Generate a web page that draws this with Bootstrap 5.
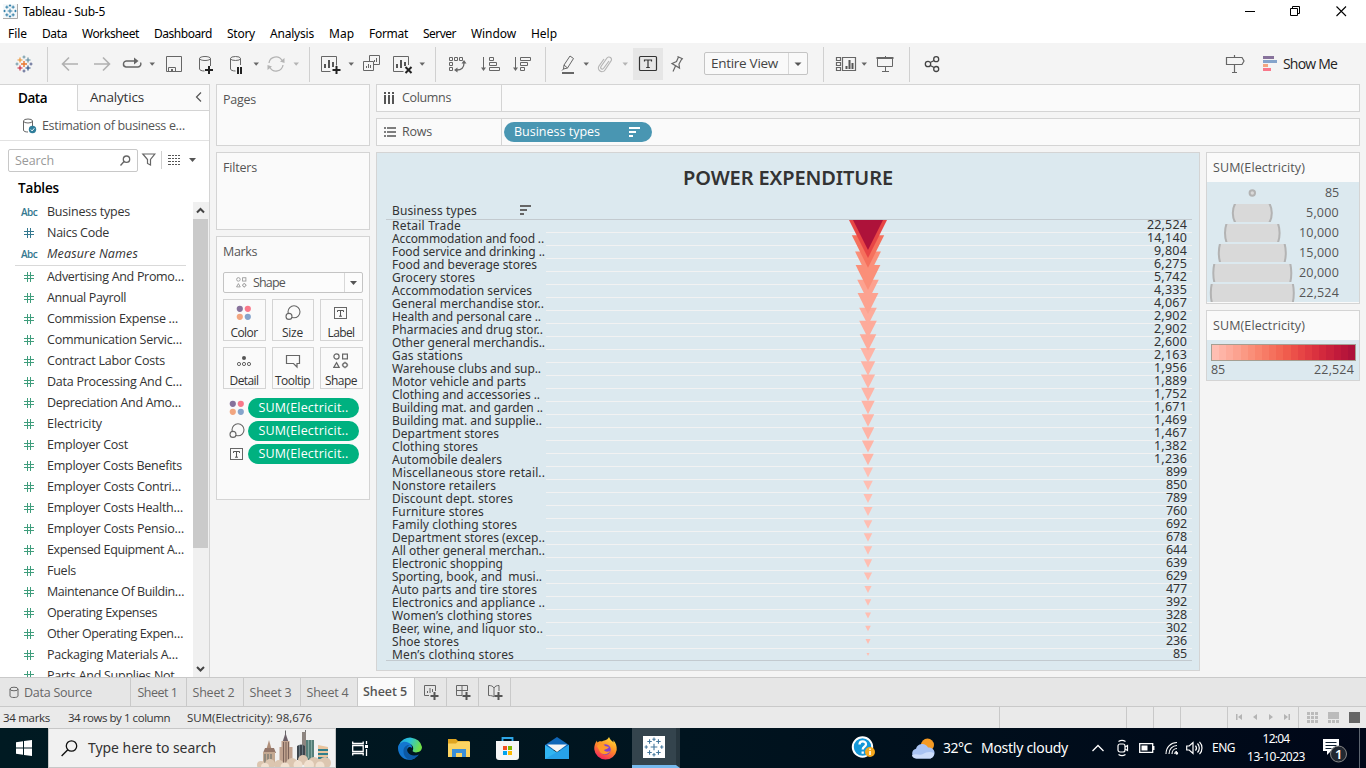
<!DOCTYPE html>
<html lang="en">
<head>
<meta charset="utf-8">
<title>Tableau - Sub-5</title>
<link href="https://cdn.jsdelivr.net/npm/bootstrap@5.3.0/dist/css/bootstrap.min.css" rel="stylesheet">
<style>
body{width:1366px;height:768px;overflow:hidden;font-family:"Open Sans","Noto Sans",sans-serif;font-size:12.5px;line-height:16px;color:#333;background:#f4f4f4}
svg{display:block;flex:none;overflow:visible}
span{white-space:nowrap}
.k{fill:none;stroke:#666;stroke-width:1}
.sys{font-family:"Noto Sans","Open Sans",sans-serif;font-size:12px;color:#000}
.titlebar{height:23px;background:#fff;padding-left:3px}
.titlebar .wm{width:46px}
.menubar{height:20px;background:#fff;padding:2px 0 0 8px}
.menubar span{margin-right:15px}
.toolbar-strip{height:41px;padding-top:5px}
.toolbar-strip>div{height:32px;flex:none;display:flex;justify-content:center}
.toolbar-strip .vsep{width:1px;height:35px;margin-top:-1px;background:#d0d0d0}
.w8{width:8px}.w10{width:10px}.w12{width:12px}.w28{width:28px}.w30{width:30px}.w32{width:32px}.w47{width:47px}
.l1{margin-left:1px}.l3{margin-left:3px}.l4{margin-left:4px}.l6{margin-left:6px}.l7{margin-left:7px}.l8{margin-left:8px}.l13{margin-left:13px}.l15{margin-left:15px}
.workarea{height:593px;gap:6px}
.data-pane{width:210px;background:#fff;border-right:1px solid #d4d4d4;border-top:1px solid #d4d4d4}
.tabs-dp{height:26px}
.tabs-dp .on{width:77px;font-weight:600;font-size:13.5px;color:#000;padding-left:18px}
.tabs-dp .off{width:132px;background:#fafafa;border:solid #d4d4d4;border-width:0 0 1px 1px;font-size:13.5px;padding:0 6px 1px 12px}
.ds-row{height:30px;border-bottom:1px solid #e2e2e2;padding-left:23px;color:#555}
.search-row{padding:8px 0 0 8px;height:33px}
.search-box{width:130px;height:23px;border:1px solid #c8c8c8;border-radius:2px;padding:0 6px;color:#999}
.tables-h{font-weight:600;font-size:13.5px;color:#000;padding:6px 0 0 18px;height:28px}
#fields{margin-top:-1px}
.field{height:21px;padding-left:21px;flex:none}
.field .ic{width:26px;flex:none}
.field .ic svg{margin-left:2px}
.abc{font-size:10px;font-weight:600;color:#34788f}
.fsep{height:1px;background:#d9d9d9;margin:1px 7px 0 15px;flex:none}
.sbar{width:16px;background:#f0f0f0;flex:none}
.thumb{height:329px;width:15px;background:#cacaca}
.panel{background:#fafafa;border:1px solid #d4d4d4;color:#555}
.cards{width:154px;gap:6px}
.cards .panel{padding:7px 6px}
.p-pages{height:62px}.p-filters{height:78px}.p-marks{height:264px}
.mark-type{height:21px;width:140px;border:1px solid #c4c4c4;border-radius:2px;background:#fcfcfc;margin-top:12px;padding-left:12px}
.mark-type .dd{width:18px;height:19px;border-left:1px solid #d8d8d8}
.mgrid{display:grid;grid-template-columns:43px 42px 43px;gap:6px;margin-top:6px;width:140px}
.mgrid>div{height:42px;border:1px solid #d4d4d4;color:#333;padding-top:5px;font-size:12px}
.mgrid svg{margin-right:1px}.mgrid span{margin-right:1px}
.pill{height:20px;border-radius:10px;color:#fff}
.pill-g{background:#00b180;width:111px}
.mline{height:23px;gap:4px;padding-left:6px}
.shelf{height:28px}
.shelf .lab{width:125px;border-right:1px solid #d4d4d4;padding-left:7px}
.pill-b{background:#4996b2;width:148px;margin-left:2px;padding:0 11px 0 10px}
.view{width:824px;height:519px;background:#dce9ef;border:1px solid #d4d4d4;padding:0 7px 0 9px;color:#333;font-family:"Noto Sans",sans-serif}
.v-title{font-weight:600;font-size:20px;height:50px;line-height:50px;padding-right:2px}
.v-head{height:17px;border-bottom:1px solid #c3cacf;padding-left:6px;font-size:12px;gap:43px}
.v-head svg{margin-top:-2px}
.vrow{height:13px;line-height:11px;font-size:12px}
.vrow .nm{width:160px;padding-left:6px;height:13px}
.vrow .pn{height:12px;border-bottom:1px solid #f2f2f2;box-sizing:content-box}
.vrow .vl{font-size:12.5px;line-height:10px;padding-right:5px}
.vbody{position:relative;height:441px;overflow:hidden;border-bottom:1px solid #c3cacf}
.vbody svg{position:absolute;left:0;top:0}
.legend{width:154px}
.legend .hd{height:29px;padding:7px 6px}
.legend .bd{background:#dce9ef}
.lg1{height:152px}.lg2{height:71px}
.lgrow{height:20px;padding-top:1px}
.lgrow svg{margin-left:1px;width:90px}
.lgrow span{margin-left:auto;padding-right:20px;font-size:12.5px}
.ramp{height:17px;width:145px;border:1px solid #a59f92}
.sheets{height:30px;background:#e6e6e6;border:solid #c9c9c9;border-width:1px 0;color:#666}
.sheets>div{height:28px;border-right:1px solid #c9c9c9;display:flex;align-items:center;justify-content:center}
.sheets .s57{width:57px;padding:1px 3px 0 0}.sheets .s56{width:56px;padding:1px 2px 0 0}.sheets .s32{width:32px}
.sheets .src{width:131px;justify-content:flex-start;padding:1px 0 0 9px;gap:5px}
.sheets .active-sheet{background:#fafafa;color:#555;font-weight:600;padding:0 2px 0 0}
.statusbar{height:21px;background:#eaeaea;font-size:11.5px;padding-left:3px;color:#333}
.statusbar .c{height:21px;border-left:1px solid #c9c9c9}
.c126{width:127px}.c27{width:27px}.c47{width:47px}.c70{width:71px}.c71{width:68px}
.taskbar{height:40px;background:linear-gradient(90deg,#001a22,#00141f 50%,#000718);color:#fff;font-family:"Noto Sans",sans-serif;font-size:14px}
.tsearch{width:288px;height:40px;background:#f1f1f1;border:1px solid #c7c7c7;color:#333;padding-left:12px}
.tk{width:49px;display:flex;justify-content:center;flex:none}
.tk-on{width:48px;height:40px;background:#34444d;border-bottom:3px solid #76b9ed;border-right:4px solid #27363e}
</style>
</head>
<body class="d-flex flex-column">
<svg width="0" height="0" class="position-absolute">
<defs>
<symbol id="caret" viewBox="-4 -16 8 32"><path d="M-2.5-1.5h5.5L.2 1.7z" fill="#666"/></symbol>
<symbol id="caret2" viewBox="-4 -16 8 32"><path d="M-2.5-1.5h5.5L.2 1.7z" fill="#b4b4b4"/></symbol>
<symbol id="hash" viewBox="0 0 12 12"><path d="M4.500 1v10M7.500 1v10M1 4.500h10M1 7.500h10" fill="none" stroke="currentColor" stroke-width="1"/></symbol>
<symbol id="shapes" viewBox="0 0 16 16"><g fill="none" stroke="#666" stroke-width="1.2"><circle cx="3.5" cy="3.5" r="2.6"/><rect x="9.6" y="1.1" width="4.8" height="4.8"/><path d="M3.5 9.6 6.2 14.4H.8z"/><circle cx="12" cy="12" r="2.2"/><path d="M12 8.8v1M12 14.2v1M8.8 12h1M14.2 12h1"/></g></symbol>
<symbol id="dots" viewBox="0 0 16 16"><circle cx="3.8" cy="3.8" r="3.1" fill="#87729b"/><circle cx="11.8" cy="3.8" r="3.1" fill="#f9788a"/><circle cx="3.8" cy="11.8" r="3.1" fill="#f2a680"/><circle cx="11.8" cy="11.8" r="3.1" fill="#85a4cb"/></symbol>
<symbol id="sizei" viewBox="0 0 16 16"><circle cx="9" cy="6.8" r="6" fill="none" stroke="#666" stroke-width="1.1"/><circle cx="4" cy="11.4" r="3" fill="#fafafa" stroke="#666" stroke-width="1.1"/></symbol>
<symbol id="labeli" viewBox="0 0 16 16"><rect x="1.5" y="2.5" width="12" height="11" fill="none" stroke="#666"/><path d="M4.5 7V5.5h6V7M7.5 5.5v5.7M6 11.2h3" fill="none" stroke="#555"/></symbol>
<symbol id="sorti" viewBox="0 0 12 12"><path d="M0 1h11v2H0zM0 5h7v2H0zM0 9h4v2H0z" fill="currentColor"/></symbol>
<symbol id="tab" viewBox="-9 -9 18 18"><path d="M0-3v6M-3 0h6" /><path d="M-4-7v4M-6-5h4M4-7v4M2-5h4M-4 3v4M-6 5h4M4 3v4M2 5h4M0-8.5v3M-1.5-7h3M0 5.5v3M-1.5 7h3M-7-1.5v3M-8.5 0h3M7-1.5v3M5.500 0h3"/></symbol>
</defs></svg>

<header class="titlebar sys d-flex align-items-center">
  <svg width="15" height="15" viewBox="0 0 15 15"><rect width="15" height="15" fill="#f4f8fa"/><path d="M0 14.5h14.500V0" fill="none" stroke="#aaa"/><g fill="none" stroke="#2a7aa5" stroke-width="1.2"><use href="#tab" x="0" y="0" width="14" height="14"/></g></svg>
  <span data-w="82" style="margin-left:5px;padding-top:1px">Tableau - Sub-5</span>
  <div class="ms-auto d-flex">
    <svg class="wm" height="20" viewBox="0 0 46 20"><path d="M17 9.500h10" stroke="#000"/></svg>
    <svg class="wm" height="20" viewBox="0 0 46 20"><path d="M16.500 6.500h7v7h-7zM18.500 6.500v-2h7v7h-2" fill="none" stroke="#000"/></svg>
    <svg class="wm" height="20" viewBox="0 0 46 20"><path d="m16.500 4.500 9.500 9.500m0-9.500-9.500 9.500" fill="none" stroke="#000" stroke-width="1.100"/></svg>
  </div>
</header>
<nav class="menubar sys d-flex align-items-center">
  <span data-w="19">File</span><span data-w="25">Data</span><span data-w="57">Worksheet</span><span data-w="58">Dashboard</span><span data-w="28">Story</span><span data-w="44">Analysis</span><span data-w="25">Map</span><span data-w="39">Format</span><span data-w="33">Server</span><span data-w="45">Window</span><span data-w="26">Help</span>
</nav>

<div class="toolbar-strip d-flex">
  <div class="w47"><svg width="32" height="32" viewBox="-16 -16 32 32" fill="none" stroke-width="1.100"><path d="M0-3v6M-3 0h6" stroke="#e8762d" stroke-width="1.400"/><path d="M-4-6.500v5M-6.500-4h5" stroke="#eb912c"/><path d="M4-6.500v5M1.500-4h5" stroke="#59879b"/><path d="M-4 1.500v5M-6.500 4h5" stroke="#c72035"/><path d="M4 1.500v5M1.500 4h5" stroke="#1f457e"/><path d="M0-8.500v3M-1.500-7h3M-7-1.500v3M-8.500 0h3" stroke="#7199a6"/><path d="M0 5.500v3M-1.500 7h3M7-1.500v3M5.500 0h3" stroke="#5b6591"/></svg></div>
  <div class="vsep"></div>
  <div class="w32 l6"><svg width="32" height="32" viewBox="-16 -16 32 32"><path d="M8 0H-7M-1-6.500-7.500 0-1 6.500" fill="none" stroke="#b0b0b0" stroke-width="1.600"/></svg></div>
  <div class="w32"><svg width="32" height="32" viewBox="-16 -16 32 32"><path d="M-8 0H7M1-6.500 7.500 0 1 6.500" fill="none" stroke="#b0b0b0" stroke-width="1.600"/></svg></div>
  <div class="w28"><svg width="32" height="32" viewBox="-16 -16 32 32"><path class="k" d="M5-3H-5a3 3 0 0 0-1 6H6a3 3 0 0 0 2.500-4.500" style="stroke-width:1.400"/><path d="M2-6.500 6.500-3 2 .5z" fill="#666"/></svg></div>
  <div class="w12"><svg width="8" height="32"><use href="#caret"/></svg></div>
  <div class="w32"><svg width="32" height="32" viewBox="-16 -16 32 32"><path class="k" d="M-7.500-7.500h15v15h-15zM-5.500 7.500v-4h7v4"/><path d="M-3 5h2v2h-2z" fill="#666"/></svg></div>
  <div class="w30"><svg width="32" height="32" viewBox="-16 -16 32 32"><path class="k" d="M5.500 2V-5.500M-5.500-5.500V5c0 1 2 2 5 2"/><ellipse class="k" cy="-5.500" rx="5.500" ry="2"/><path d="M4 2v8M0 6h8" stroke="#222" stroke-width="2"/></svg></div>
  <div class="w30"><svg width="32" height="32" viewBox="-16 -16 32 32"><path class="k" d="M5.500 1V-5.500M-4.500-5.500V5c0 1 2 2 5 2"/><ellipse class="k" cx=".5" cy="-5.500" rx="5" ry="2"/><path d="M3 3v7M6 3v7" stroke="#222" stroke-width="2"/></svg></div>
  <div class="w12"><svg width="8" height="32"><use href="#caret"/></svg></div>
  <div class="w28"><svg width="32" height="32" viewBox="-16 -16 32 32"><path d="M-7-1a7 7 0 0 1 13-2.500M7 1a7 7 0 0 1-13 2.500" fill="none" stroke="#b4b4b4" stroke-width="1.300"/><path d="M8.500-6v5L4-2.500zM-8.500 6V1L-4 2.500z" fill="#b4b4b4"/></svg></div>
  <div class="w12"><svg width="8" height="32"><use href="#caret2"/></svg></div>
  <div class="vsep l7"></div>
  <div class="w32 l4"><svg width="32" height="32" viewBox="-16 -16 32 32"><path class="k" d="M6.500 1.500v-9h-15v15h9"/><path d="M-5 4V0M-1 4V-4M3 3V-2" stroke="#555" stroke-width="2"/><path d="M6.500 2v8M2.500 6h8" stroke="#222" stroke-width="2"/></svg></div>
  <div class="w10"><svg width="8" height="32"><use href="#caret"/></svg></div>
  <div class="w32"><svg width="32" height="32" viewBox="-16 -16 32 32"><path class="k" d="M-2.500-2.500v-6h10v9h-6M-8.500-2.500h10v9h-10zM-5.500 4V2M-3.500 4V0M-1.500 4V1M1-3v0M2.500-2v-2M4.500-2v-4"/></svg></div>
  <div class="w28"><svg width="32" height="32" viewBox="-16 -16 32 32"><path class="k" d="M6.500 1v-8.500h-15v15h10"/><path d="M-5 4V0M-1 4V-4M3 2V-2" stroke="#555" stroke-width="2"/><path d="m3.500 3 6 6m0-6-6 6" stroke="#222" stroke-width="2"/></svg></div>
  <div class="w12"><svg width="8" height="32"><use href="#caret"/></svg></div>
  <div class="vsep l7"></div>
  <div class="w32 l6"><svg width="32" height="32" viewBox="-16 -16 32 32"><path class="k" d="M-8.500-6.500h3v3h-3zM-3.500-6.500h3v3h-3zM1.500-6.500h3v3h-3zM-8.500-1.500h3v3h-3zM-8.500 3.500h3v3h-3z"/><path class="k" d="M6-1C6 3.500 3.500 6-1 6" style="stroke-width:1.300"/><path d="M3.500-.5 6-4 8.500-.5zM-.5 3.500-4 6l3.500 2.500z" fill="#666"/></svg></div>
  <div class="w32"><svg width="32" height="32" viewBox="-16 -16 32 32"><path class="k" d="M-6.500-7V6M-.5-6.500h4v3h-4zM-.5-1.500h7v3h-7zM-.5 3.500h10v3h-10z"/><path d="M-9 3.500h5L-6.500 7z" fill="#666"/></svg></div>
  <div class="w32"><svg width="32" height="32" viewBox="-16 -16 32 32"><path class="k" d="M-6.500-7V6M-1.500-6.500h10v3h-10zM-1.500-1.500h7v3h-7zM-1.500 3.500h4v3h-4z"/><path d="M-9 3.500h5L-6.500 7z" fill="#666"/></svg></div>
  <div class="vsep l7"></div>
  <div class="w28 l8"><svg width="32" height="32" viewBox="-16 -16 32 32"><path class="k" d="m-4 1 6-9 3.500 2.500L-.5 4zl-.5 4 4-1M-4.500 5-6 6.500"/><path d="M-6 9H6" stroke="#666" stroke-width="2"/></svg></div>
  <div class="w8"><svg width="8" height="32"><use href="#caret"/></svg></div>
  <div class="w30"><svg width="32" height="32" viewBox="-16 -16 32 32"><path d="M4-3-1.500 4.500a1.500 1.500 0 0 1-2.500-2L2-6a2.500 2.500 0 0 1 4 3L0 6a3.500 3.500 0 0 1-6-4L-1-5" fill="none" stroke="#b4b4b4" stroke-width="1.200"/></svg></div>
  <div class="w10"><svg width="8" height="32"><use href="#caret2"/></svg></div>
  <div class="w30 l3" style="background:#e6e6e6"><svg width="32" height="32" viewBox="-16 -16 32 32"><rect x="-8.500" y="-7.500" width="17" height="14" rx="1" fill="none" stroke="#333" stroke-width="1.200"/><path d="M-3.500-2.500v-1.500h7v1.500M0-4v7.500M-1.800 3.500h3.600" fill="none" stroke="#333" stroke-width="1.200"/></svg></div>
  <div class="w28"><svg width="32" height="32" viewBox="-16 -16 32 32"><path class="k" d="M.5-7.500 6-5M1.500-7-.5-2.500-5-.5 2.500 4 2 0 5-5.500M-1.500 2-4 7.500" style="stroke-width:1.200"/></svg></div>
  <div class="l13 align-items-center" style="width:104px;height:23px;margin-top:4px;border:1px solid #c4c4c4;border-radius:2px;background:#f9f9f9;font-size:13.500px;color:#444"><span data-w="67" style="margin:-2px 0 0 1px">Entire View</span><div class="d-flex justify-content-center align-items-center" style="width:19px;height:21px;border-left:1px solid #d8d8d8;margin-left:10px;margin-right:-5px"><svg width="8" height="32" viewBox="-4 -16 8 32"><path d="M-3.500-1.500h7L0 2z" fill="#555"/></svg></div></div>
  <div class="vsep l15"></div>
  <div class="w30 l6"><svg width="32" height="32" viewBox="-16 -16 32 32"><path class="k" d="M-8.500-6.500h4v3h-4zM-8.500-1.500h4v3h-4zM-8.500 3.500h4v3h-4zM-2.500-6.500h13v13h-13z" style="stroke-width:1.200"/><path d="M1.500 5V2M4.500 5V-4M7.500 5V-1" stroke="#555" stroke-width="2"/></svg></div>
  <div class="w8"><svg width="8" height="32"><use href="#caret"/></svg></div>
  <div class="w32 l1"><svg width="32" height="32" viewBox="-16 -16 32 32"><path d="M-8.500-6H8.500" stroke="#666" stroke-width="2"/><path class="k" d="M.5-8v2M-7.500-5v7.500h15V-5M.5 3v4M-3 7.500h7"/></svg></div>
  <div class="vsep l8"></div>
  <div class="w32 l6"><svg width="32" height="32" viewBox="-16 -16 32 32" fill="none" stroke="#444" stroke-width="1.300"><circle cx="-4" r="2.700"/><circle cx="4.200" cy="-4.800" r="2.500"/><circle cx="4.200" cy="5" r="2.500"/><path d="m-1.800-1.500 4-2M-1.800 1.500l4 2"/></svg></div>
  <div class="w32 ms-auto"><svg width="32" height="32" viewBox="-16 -16 32 32"><path class="k" d="M-8.500-6.500H7L9-3 7 .5H-8.500zM-.5-9v2M-.5.500v8M-3 8.500h5" style="stroke-width:1.200"/></svg></div>
  <div style="margin:0 29px 0 12px;color:#222;font-size:14px" class="align-items-center"><svg width="16" height="16" viewBox="0 0 16 16"><path d="M0 0h11v3H0z" fill="#87729b"/><path d="M0 4h14v3H0z" fill="#85a4cb"/><path d="M0 8h5v3H0z" fill="#f2a680"/><path d="M0 12h8v3H0z" fill="#f9788a"/></svg><span data-w="54" style="margin:-1px 0 0 4px">Show Me</span></div>
</div>

<main class="workarea d-flex">
  <aside class="data-pane d-flex flex-column flex-shrink-0">
    <div class="tabs-dp d-flex flex-shrink-0"><div class="on d-flex align-items-center"><span data-w="29">Data</span></div><div class="off d-flex align-items-center justify-content-between"><span data-w="54">Analytics</span><svg width="8" height="10" viewBox="0 0 8 10"><path d="M6 .5 1.500 5 6 9.500" fill="none" stroke="#555" stroke-width="1.200"/></svg></div></div>
    <div class="ds-row d-flex align-items-center flex-shrink-0"><svg width="14" height="16" viewBox="0 0 14 16"><ellipse class="k" cx="5" cy="3" rx="4.500" ry="2"/><path class="k" d="M.5 3v9c0 1.500 2 2 4.500 2M9.500 3v5"/><circle cx="9.500" cy="11.500" r="3.700" fill="#2f7e9b"/><path d="m7.800 11.500 1.300 1.400 2.200-2.600" fill="none" stroke="#fff"/></svg><span data-w="143" style="margin-left:5px">Estimation of business e…</span></div>
    <div class="search-row d-flex flex-shrink-0"><div class="search-box d-flex align-items-center justify-content-between"><span data-w="39">Search</span><svg width="11" height="11" viewBox="0 0 11 11"><circle class="k" cx="6.500" cy="4.200" r="3.200" style="stroke-width:1.300"/><path class="k" d="m4 6.500-3.500 4" style="stroke-width:1.300"/></svg></div>
      <svg style="margin:4px 0 0 4px" width="14" height="14" viewBox="0 0 14 14"><path class="k" d="M.8 1h12L8.500 6.500v5.500l-3-1.500v-4z" style="stroke-width:1.200"/></svg>
      <svg style="margin:2px 0 0 5px" width="42" height="18" viewBox="0 0 42 18"><path d="M.5 0v18" stroke="#d0d0d0"/><path d="M7 4.500h3m1 0h2m1 0h2m1 0h2M7 7.500h3m1 0h2m1 0h2m1 0h2M7 10.500h3m1 0h2m1 0h2m1 0h2M7 13.500h3m1 0h2m1 0h2m1 0h2" stroke="#555" stroke-width="1"/><path d="M28 7h7l-3.500 4z" fill="#555"/></svg></div>
    <div class="tables-h flex-shrink-0"><span data-w="41">Tables</span></div>
    <div class="d-flex flex-grow-1 overflow-hidden"><div id="fields" class="flex-grow-1 overflow-hidden"></div>
      <div class="sbar d-flex flex-column"><svg width="15" height="17" viewBox="0 0 15 17"><path d="m4 10.500 3.500-3.500 3.500 3.500" fill="none" stroke="#444" stroke-width="2"/></svg><div class="thumb"></div><svg class="mt-auto" width="15" height="17" viewBox="0 0 15 17"><path d="m4 7 3.500 3.500L11 7" fill="none" stroke="#444" stroke-width="2"/></svg></div></div>
  </aside>

  <section class="cards d-flex flex-column flex-shrink-0">
    <div class="panel p-pages"><span data-w="33">Pages</span></div>
    <div class="panel p-filters"><span data-w="34">Filters</span></div>
    <div class="panel p-marks"><span data-w="34">Marks</span>
      <div class="mark-type d-flex align-items-center"><svg width="11" height="11" opacity=".7"><use href="#shapes"/></svg><span data-w="32" style="margin-left:6px">Shape</span><div class="dd ms-auto d-flex justify-content-center align-items-center"><svg width="7" height="4"><path d="M0 0h7L3.500 4z" fill="#555"/></svg></div></div>
      <div class="mgrid">
        <div class="d-flex flex-column align-items-center"><svg width="16" height="16"><use href="#dots"/></svg><span data-w="27" class="mt-1">Color</span></div>
        <div class="d-flex flex-column align-items-center"><svg width="16" height="16"><use href="#sizei"/></svg><span data-w="21" class="mt-1">Size</span></div>
        <div class="d-flex flex-column align-items-center"><svg width="16" height="16"><use href="#labeli"/></svg><span data-w="27" class="mt-1">Label</span></div>
        <div class="d-flex flex-column align-items-center"><svg width="16" height="16" viewBox="0 0 16 16"><circle cx="8" cy="5" r="2" fill="#555"/><g class="k"><circle cx="3" cy="11" r="1.600"/><circle cx="8" cy="11" r="1.600"/><circle cx="13" cy="11" r="1.600"/></g></svg><span data-w="29" class="mt-1">Detail</span></div>
        <div class="d-flex flex-column align-items-center"><svg width="16" height="16" viewBox="0 0 16 16"><path class="k" d="M1.500 2.500h13v8h-2.500v3.500L8.500 10.500h-7z" style="stroke-width:1.200"/></svg><span data-w="35" class="mt-1">Tooltip</span></div>
        <div class="d-flex flex-column align-items-center"><svg width="16" height="16"><use href="#shapes"/></svg><span data-w="32" class="mt-1">Shape</span></div>
      </div>
      <div style="margin-top:7px">
        <div class="mline d-flex align-items-center"><svg width="16" height="16"><use href="#dots"/></svg><div class="pill pill-g d-flex align-items-center justify-content-center" style="margin-left:-1px"><span data-w="90">SUM(Electricit..</span></div></div>
        <div class="mline d-flex align-items-center"><svg width="16" height="16"><use href="#sizei"/></svg><div class="pill pill-g d-flex align-items-center justify-content-center" style="margin-left:-1px"><span data-w="90">SUM(Electricit..</span></div></div>
        <div class="mline d-flex align-items-center"><svg width="16" height="16"><use href="#labeli"/></svg><div class="pill pill-g d-flex align-items-center justify-content-center" style="margin-left:-1px"><span data-w="90">SUM(Electricit..</span></div></div>
      </div>
    </div>
  </section>

  <section class="d-flex flex-column flex-shrink-0" style="width:984px;gap:6px">
    <div class="panel shelf d-flex"><div class="lab d-flex align-items-center"><svg width="11" height="14" viewBox="0 0 11 14"><path d="M0 2h2M4 2h2M8 2h2" stroke="#555" stroke-width="2"/><path d="M1 4v9M5 4v9M9 4v9" stroke="#555" stroke-width="2"/></svg><span data-w="49" style="margin-left:7px">Columns</span></div></div>
    <div class="panel shelf d-flex align-items-center"><div class="lab d-flex align-items-center align-self-stretch"><svg width="12" height="12" viewBox="0 0 12 12"><path d="M0 2h2M0 6h2M0 10h2M3 2h9M3 6h9M3 10h9" stroke="#555" stroke-width="1.600"/></svg><span data-w="30" style="margin-left:6px">Rows</span></div><div class="pill pill-b d-flex align-items-center justify-content-between"><span data-w="86">Business types</span><svg width="12" height="12"><use href="#sorti"/></svg></div></div>
    <div class="d-flex" style="gap:6px">
      <div class="view">
        <div class="v-title text-center"><span data-w="210">POWER EXPENDITURE</span></div>
        <div class="v-head d-flex align-items-center"><span data-w="85">Business types</span><svg width="12" height="12" color="#666"><use href="#sorti"/></svg></div>
        <div class="vbody" id="rows"></div>
      </div>
      <div class="d-flex flex-column" style="gap:6px">
        <div class="panel legend lg1"><div class="hd"><span data-w="92">SUM(Electricity)</span></div><div class="bd" id="sizes"></div></div>
        <div class="panel legend lg2"><div class="hd"><span data-w="92">SUM(Electricity)</span></div><div class="bd" style="height:40px;padding:4px 5px 0 4px"><div class="ramp" id="ramp"></div><div class="d-flex justify-content-between" style="padding-top:1px"><span data-w="14">85</span><span data-w="40">22,524</span></div></div></div>
      </div>
    </div>
  </section>
</main>

<nav class="sheets d-flex">
  <div class="src"><svg width="10" height="12" viewBox="0 0 10 12"><ellipse class="k" cx="5" cy="2" rx="4" ry="1.800"/><path class="k" d="M1 2v7c0 2 8 2 8 0V2"/></svg><span data-w="68">Data Source</span></div>
  <div class="s56"><span data-w="40">Sheet 1</span></div><div class="s57"><span data-w="42">Sheet 2</span></div><div class="s57"><span data-w="42">Sheet 3</span></div><div class="s57"><span data-w="42">Sheet 4</span></div><div class="s57 active-sheet"><span data-w="44">Sheet 5</span></div>
  <div class="s32"><svg width="16" height="16" viewBox="0 0 16 16"><path class="k" d="M6 11.500H1.500v-10h11V7M4.500 9V7M7 9V4M9.500 8V5"/><path d="M11.500 8v8M7.500 12h8" stroke="#555" stroke-width="2"/></svg></div>
  <div class="s32"><svg width="16" height="16" viewBox="0 0 16 16"><path class="k" d="M7 11.500H1.500v-10h11V7M7 1.500v10M1.500 6.500h11"/><path d="M11.500 8v8M7.500 12h8" stroke="#555" stroke-width="2"/></svg></div>
  <div class="s32"><svg width="16" height="16" viewBox="0 0 16 16"><path class="k" d="M1.500 1.500C4 1.500 6 2 7 4c1-2 3-2.500 5-2.500V7M1.500 1.500v10c3 0 4.500.5 5.500 1.500V4"/><path d="M11.500 8v8M7.500 12h8" stroke="#555" stroke-width="2"/></svg></div>
</nav>
<footer class="statusbar d-flex align-items-center">
  <span data-w="47">34 marks</span><span data-w="102" style="margin-left:18px">34 rows by 1 column</span><span data-w="125" style="margin-left:17px">SUM(Electricity): 98,676</span>
  <div class="ms-auto c c126"></div><div class="c c27"></div><div class="c c27"></div><div class="c c47"></div>
  <div class="c c70"><svg width="69" height="20" viewBox="0 0 69 20"><path d="M8 7h1.500v6H8zM14 7v6l-4-3zM29 7v6l-4-3zM41 7v6l4-3zM56 7v6l4-3zM60.500 7H62v6h-1.500z" fill="#b4b4b4"/></svg></div>
  <div class="c c71"><svg width="67" height="20" viewBox="0 0 67 20"><path d="M8 5h3v3H8zM12 5h3v3h-3zM16 5h3v3h-3zM8 9h3v3H8zM12 9h3v3h-3zM16 9h3v3h-3zM8 13h3v3H8zM12 13h3v3h-3zM16 13h3v3h-3zM29 5h11v7H29zM29 13h3v3h-3zM33 13h3v3h-3zM37 13h3v3h-3z" fill="#bbb"/><path d="M50 5h11v11H50z" fill="#666"/></svg></div>
</footer>

<footer class="taskbar d-flex align-items-center">
  <div style="width:48px" class="d-flex justify-content-center"><svg width="16" height="16" viewBox="0 0 16 16"><path d="M0 2.200 7 1.200v6.300H0zM8 1 16 0v7.500H8zM0 8.500h7v6.300l-7-1zM8 8.500h8V16l-8-1z" fill="#fff"/></svg></div>
  <div class="tsearch d-flex align-items-center"><svg width="17" height="17" viewBox="0 0 17 17"><circle cx="10.500" cy="6" r="5.200" fill="none" stroke="#111" stroke-width="1.300"/><path d="M6.800 9.700.6 16" stroke="#111" stroke-width="1.400"/></svg><span data-w="128" style="margin-left:10px">Type here to search</span>
    <svg class="ms-auto" style="margin-right:3px" width="76" height="38" viewBox="0 0 76 38">
      <path d="m13 11 2.500 9h-5z" fill="#b08f7a"/><path d="M9 19h9l2 5H7z" fill="#94776a"/><path d="M7 23h12v14H7z" fill="#c4a992"/><path d="M9 25v10M12 25v10M15 25v10" stroke="#5f6b69"/>
      <path d="M29.500 1.500v8" stroke="#666"/><path d="m29.500 4 3 9h-6z" fill="#6c6069"/><path d="M25.500 12h8v6h3v19h-13V18h2z" fill="#c0a28f"/><path d="M27.500 13v24M30 13v24M32.500 13v24" stroke="#7b6259"/>
      <path d="M49.500 1v8" stroke="#777"/><path d="M46 3h4v26h-4z" fill="#8d8580"/><path d="M50 11h8v20h-8z" fill="#557f79"/><path d="M52.500 11v18M55.500 11v18" stroke="#86aaa3"/>
      <path d="M41 17q4-3 8 0v14h-8z" fill="#3d464d"/><path d="M43.500 16v14M46.500 16v14" stroke="#6b7880"/>
      <path d="M62 16l10 2v17H62z" fill="#e8c49d"/><path d="M62 21h10M62 25h10M62 29h10" stroke="#2f7f8c" stroke-width="2"/>
      <g fill="#dcc6b0"><circle cx="5" cy="36" r="4"/><circle cx="14" cy="35" r="5"/><circle cx="23" cy="36" r="5"/><circle cx="36" cy="35" r="6"/><circle cx="47" cy="31" r="5"/><circle cx="58" cy="34" r="6"/><circle cx="69" cy="34" r="6"/></g><g fill="#f1e1d0"><circle cx="9" cy="38" r="4"/><circle cx="29" cy="38" r="4.500"/><circle cx="42" cy="36" r="4.500"/><circle cx="53" cy="36" r="5"/><circle cx="64" cy="37" r="4.500"/></g><path d="M-2 38h80v1H-2z" fill="#c7c7c7"/><path d="M-2 39h80v5H-2z" fill="#001a22"/></svg></div>
  <div class="tk"><svg width="17" height="17" viewBox="0 0 17 17" fill="none" stroke="#fff" stroke-width="1.300"><path d="M.7 1.500V3.500h10.500v-2M.7 5.500h10.500v6H.7zM.7 15.500v-2h10.500v2M14.500 1v3M14.500 9v7"/><path d="M13 5h3v3h-3z" fill="#fff" stroke="none"/></svg></div>
  <div class="tk"><svg width="24" height="24" viewBox="0 0 24 24"><defs><linearGradient id="eg" x1="0" x2="1" y2=".3"><stop stop-color="#1fa7e6"/><stop offset=".5" stop-color="#2dc3d6"/><stop offset="1" stop-color="#6fe04a"/></linearGradient></defs><path d="M1 9A12 11.500 0 0 1 24 11c0 6-8 6.500-9.500 4 1.500-2 1-7-4-7C6 8 2 11 1 9z" fill="url(#eg)"/><path d="M0 12C0 7 6 4.500 10 6.500c3 1 4.500 3.500 4 5.500-2-2-5-1-5 3 0 4 4 7.500 9 6.500-2.500 2-5 2.500-7 2.300C4 23.500 0 18 0 12z" fill="#1376cf"/><path d="M5.500 15c0-4 3-6.500 6-6-3 1.500-3 5-1.500 7.500 2 3 6 4 11 2-2 3-6 5-9.500 5C7 22.500 5.500 18.500 5.500 15z" fill="#0c59a4"/></svg></div>
  <div class="tk"><svg width="22" height="20" viewBox="0 0 22 20"><path d="M0 1h8l2 2h11v4H0z" fill="#e0a520"/><path d="M0 5.500 8 5.500 10 3.500h12V19H0z" fill="#fcd462"/><path d="M4 11h14v8h-4v-4H8v4H4z" fill="#3b8fd8"/></svg></div>
  <div class="tk"><svg width="23" height="23" viewBox="0 0 23 23"><path d="M6.500 4.500V1h10v3.500" fill="none" stroke="#2ea7e8" stroke-width="1.800"/><path d="M0 4h23v16a3 3 0 0 1-3 3H3a3 3 0 0 1-3-3z" fill="#f6f6f6"/><path d="M7 9h4v4H7z" fill="#f25022"/><path d="M12 9h4v4h-4z" fill="#7fba00"/><path d="M7 14h4v4H7z" fill="#00a4ef"/><path d="M12 14h4v4h-4z" fill="#ffb900"/></svg></div>
  <div class="tk"><svg width="24" height="22" viewBox="0 0 24 22"><path d="M12 0 24 8v5H0V8z" fill="#1067b8"/><path d="M0 8v14h24V8L12 15.500z" fill="#31b5f2"/><path d="M0 22 24 8v14z" fill="#2196e3" opacity=".6"/><path d="M2 7.500h20l-10 7.500z" fill="#f6f6f6"/></svg></div>
  <div class="tk"><svg width="23" height="23" viewBox="0 0 23 23"><defs><linearGradient id="fg" x1=".8" x2=".3" y2="1"><stop stop-color="#ffdf3c"/><stop offset=".45" stop-color="#ff9425"/><stop offset="1" stop-color="#f5225f"/></linearGradient></defs><path d="M15 0c1 3 3 3.500 4.500 5.500 0-1 0-1.500-.3-2.500C22 6 23 9 22.700 13A11.300 11.300 0 0 1 .3 12.500C0 9 1 6 3 3.500c0 1 .2 1.500.5 2C5 4 6.500 4 8 4.500 9.500 3 13 4 15 0z" fill="url(#fg)"/><circle cx="11.500" cy="12.500" r="5.200" fill="#8341d2"/><path d="M3 9c2-3 6-3 8 0l4 1c-1 2-4 2-5 3 1 2 4 2 6 1-1 3-7 5-10 1z" fill="#ff9a2a"/></svg></div>
  <div class="tk-on d-flex align-items-center justify-content-center" style="margin-left:2px"><svg width="22" height="22" viewBox="0 0 22 22"><path d="M0 0h22v22H0z" fill="#fff"/><g fill="none" stroke="#45789d" stroke-width="1"><use href="#tab" x="1" y="1" width="20" height="20"/></g></svg></div>
  <svg style="margin-left:172px" width="24" height="24" viewBox="0 0 24 24"><circle cx="10.500" cy="11" r="9.700" fill="#1497d8" stroke="#fff" stroke-width="2"/><path d="M7.500 8.500c0-4 6.500-4 6.500-.3 0 2.500-3.300 2.500-3.300 5.300M10.700 15.500v2.300" fill="none" stroke="#fff" stroke-width="2.300"/><circle cx="18" cy="16" r="5" fill="#f6a81c"/><path d="M18 15v4M18 12.500v1.500" stroke="#fff" stroke-width="1.500"/></svg>
  <svg style="margin-left:35px" width="25" height="21" viewBox="0 0 25 21"><circle cx="16.500" cy="7" r="6.500" fill="#f59a23"/><path d="M5.500 20.500a5 5 0 0 1-.5-9.800 6.500 6.500 0 0 1 12-1.200 5.500 5.500 0 0 1 2 11z" fill="#a9c3f3"/><path d="M1 17c4-2 8 1 11-1s7-3 11-1c0 3-2 5.500-4 5.500H5.500C3 20.500 1 19 1 17z" fill="#cdddfb"/></svg>
  <span data-w="29" style="margin-left:7px">32°C</span><span data-w="87" style="margin-left:9px">Mostly cloudy</span>
  <svg style="margin-left:23px" width="14" height="8" viewBox="0 0 14 8"><path d="m1.500 7 5.500-5.500L12.500 7" fill="none" stroke="#fff" stroke-width="1.300"/></svg>
  <svg style="margin-left:11px" width="14" height="16" viewBox="0 0 14 16" fill="none" stroke="#fff" stroke-width="1.200"><rect x="2" y="4" width="7" height="8" rx="2"/><path d="m9 7 2.500-1.500v5L9 9M2.500 1.500c2-1.300 5-1.300 7 0M2.500 14.500c2 1.300 5 1.300 7 0"/></svg>
  <svg style="margin-left:9px" width="16" height="10" viewBox="0 0 16 10"><path d="M.7.700h13v8.600H.7zM14.800 3v4" fill="none" stroke="#fff" stroke-width="1.300"/><path d="M2.500 2.500h6v5h-6z" fill="#fff"/></svg>
  <svg style="margin-left:10px" width="14" height="14" viewBox="0 0 14 14" fill="none" stroke="#fff" stroke-width="1.100"><path d="M1 13C1 6 6 1.500 12 1.500M4 13c0-5 3.500-8.500 8-8.500M7 13c0-3 2-5.500 5-5.500M9.800 13c0-1.500 1-2.500 2.200-2.500" /><circle cx="11.800" cy="12.300" r=".8" fill="#fff"/></svg>
  <svg style="margin-left:7px" width="17" height="14" viewBox="0 0 17 14" fill="none" stroke="#fff" stroke-width="1.200"><path d="M.7 5v4h2.500L7 12.500v-11L3.200 5zM9.500 4.500a4 4 0 0 1 0 5M11.500 2.500a6.500 6.500 0 0 1 0 9M13.500.8a9 9 0 0 1 0 12.400"/></svg>
  <span data-w="23" style="margin-left:9px;font-size:12px">ENG</span>
  <div class="d-flex flex-column align-items-center" style="margin-left:9px;width:64px;font-size:12px;line-height:18px"><span data-w="27">12:04</span><span data-w="58">13-10-2023</span></div>
  <svg style="margin-left:15px;margin-top:6px" width="36" height="26" viewBox="0 0 36 26"><path d="M0 1h16v12H8l-4 4v-4H0z" fill="#fff"/><path d="M2.500 4.500h11M2.500 7.500h11M2.500 10.500h6" stroke="#123"/><circle cx="15.500" cy="16" r="8" fill="#222831" stroke="#888"/><text x="12" y="21" fill="#fff" font-size="13" font-weight="600">1</text><path d="M36.500-10v40" stroke="#5d6570"/></svg>
</footer>

<script src="https://cdn.jsdelivr.net/npm/bootstrap@5.3.0/dist/js/bootstrap.bundle.min.js"></script>
<script>
const fields=[["Business types",83,"a"],["Naics Code",62,"b"],["Measure Names",91,"i"],["Advertising And Promo…",137],["Annual Payroll",79],["Commission Expense …",131],["Communication Servic…",135],["Contract Labor Costs",118],["Data Processing And C…",135],["Depreciation And Amo…",134],["Electricity",55],["Employer Cost",81],["Employer Costs Benefits",135],["Employer Costs Contri…",134],["Employer Costs Health…",136],["Employer Costs Pensio…",137],["Expensed Equipment A…",137],["Fuels",29],["Maintenance Of Buildin…",137],["Operating Expenses",110],["Other Operating Expen…",136],["Packaging Materials A…",131],["Parts And Supplies Not…",137]];
document.getElementById('fields').innerHTML=fields.map(([t,w,k])=>{
  const ic=(k==='a'||k==='i')?'<span class="abc" data-w="16">Abc</span>':`<svg width="12" height="12" color="${k==='b'?'#34788f':'#3f9d7c'}"><use href="#hash"/></svg>`;
  return `<div class="field d-flex align-items-center"><div class="ic d-flex">${ic}</div><span class="${k==='i'?'fst-italic':''}" data-w="${w}">${t}</span></div>`+(k==='i'?'<div class="fsep"></div>':'');
}).join('');
const ramp=["#ffbeb2","#feb4a6","#fdab9b","#fca290","#fb9984","#fa8f79","#f9856e","#f77b66","#f5715d","#f36754","#f05c4d","#ec5049","#e74545","#e13b42","#da323f","#d3293d","#ca223c","#c11a3b","#b8163a","#ae123a"];
document.getElementById('ramp').style.background='linear-gradient(90deg,'+ramp.map((c,i)=>`${c} ${i*5}% ${i*5+5}%`).join(',')+')';
const rows=[["Retail Trade",69,22524],["Accommodation and food ..",152,14140],["Food service and drinking ..",153,9804],["Food and beverage stores",145,6275],["Grocery stores",83,5742],["Accommodation services",140,4335],["General merchandise stor..",152,4067],["Health and personal care ..",149,2902],["Pharmacies and drug stor..",151,2902],["Other general merchandis..",153,2600],["Gas stations",71,2163],["Warehouse clubs and sup..",149,1956],["Motor vehicle and parts",134,1889],["Clothing and accessories ..",148,1752],["Building mat. and garden ..",151,1671],["Building mat. and supplie..",150,1469],["Department stores",107,1467],["Clothing stores",86,1382],["Automobile dealers",110,1236],["Miscellaneous store retail..",153,899],["Nonstore retailers",104,850],["Discount dept. stores",121,789],["Furniture stores",92,760],["Family clothing stores",125,692],["Department stores (excep..",153,678],["All other general merchan..",153,644],["Electronic shopping",111,639],["Sporting, book, and  musi..",150,629],["Auto parts and tire stores",145,477],["Electronics and appliance ..",153,392],["Women’s clothing stores",140,328],["Beer, wine, and liquor sto..",151,302],["Shoe stores",67,236],["Men’s clothing stores",122,85]];
const vw={6:40,5:33,3:21,2:14};
let tri='';
rows.forEach(([t,w,v],i)=>{
  const h=Math.sqrt(v)*.1635,cy=5.5+13*i,c=ramp[Math.min(19,Math.floor((v-85)/22439*20))];
  tri=`<path d="M${482-h} ${cy-h}h${2*h}L482 ${cy+h}z" fill="${c}"/>`+tri;
});
document.getElementById('rows').innerHTML=rows.map(([t,w,v])=>{
  const s=v.toLocaleString('en-US');
  return `<div class="vrow d-flex"><div class="nm flex-shrink-0"><span data-w="${w}">${t.replace('  ',' \u00a0')}</span></div><div class="pn flex-grow-1 text-end"><div class="vl"><span data-w="${vw[s.length]}">${s}</span></div></div></div>`;
}).join('')+`<svg width="806" height="441">${tri}</svg>`;
document.getElementById('sizes').innerHTML=[["85",2.7,14],["5,000",19.5,33],["10,000",27.3,40],["15,000",33.5,40],["20,000",39,40],["22,524",41.5,40]].map(([t,r,w])=>
  `<div class="lgrow d-flex align-items-center"><svg height="18" viewBox="0 0 90 18" style="overflow:hidden"><circle cx="44.300" cy="9" r="${r}" fill="#d9d9d9" stroke="#b3b3b3" stroke-width="2"/></svg><span><b class="fw-normal d-inline-block" data-w="${w}">${t}</b></span></div>`).join('');
document.querySelectorAll('[data-w]').forEach(e=>{
  const r=document.createRange();r.selectNodeContents(e);
  const n=[...e.textContent].length,nat=r.getBoundingClientRect().width;
  e.style.letterSpacing=((e.dataset.w-nat)/n).toFixed(3)+'px';
});
</script>
</body>
</html>
